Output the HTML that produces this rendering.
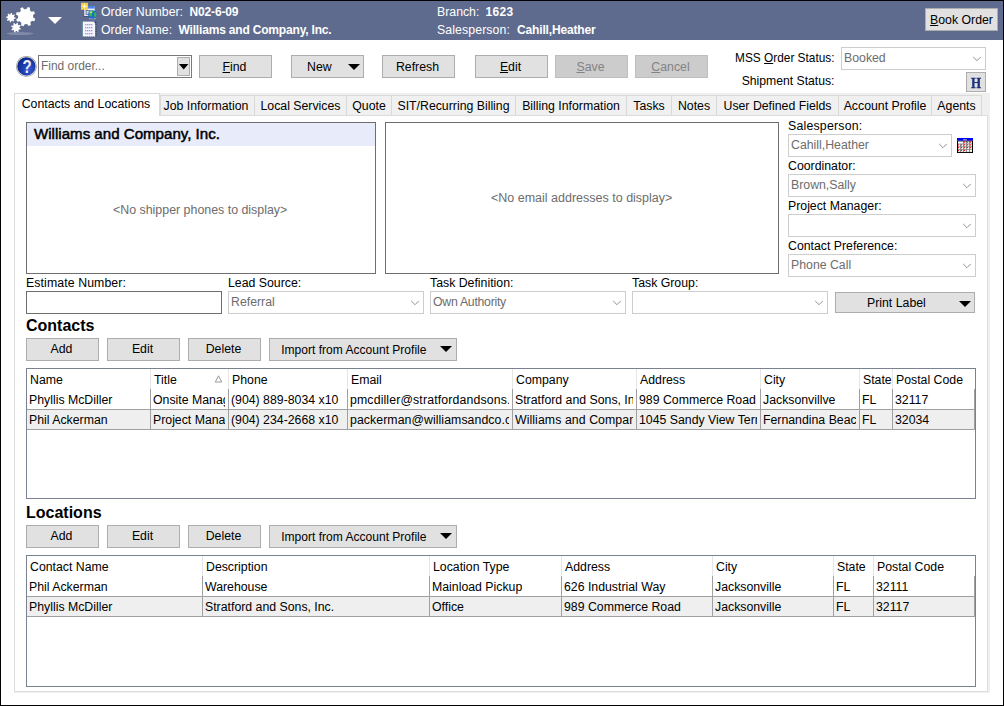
<!DOCTYPE html>
<html><head><meta charset="utf-8"><title>Order</title>
<style>
*{box-sizing:border-box;margin:0;padding:0}
html,body{width:1004px;height:706px;overflow:hidden;background:#fff}
body{font-family:"Liberation Sans",Arial,sans-serif;font-size:12.3px;color:#000;position:relative;line-height:14px}
.a{position:absolute;white-space:nowrap}
#win{left:0;top:0;width:1004px;height:706px;border:1px solid #000}
#hdr{left:1px;top:1px;width:1002px;height:39px;background:#5f6b8e}
.ht{color:#fff}
.hb{color:#fff;font-weight:bold;font-size:12px;letter-spacing:-0.15px}
.btn{background:#e1e1e1;border:1px solid #adadad;text-align:center;padding-right:2px;line-height:21px}
.btn.dis{background:#cccccc;border-color:#bfbfbf;color:#838383}
.cb{background:#fff;border:1px solid #cdcdcd;color:#6d6d6d;line-height:21px;padding-left:2px;font-size:12.3px}
.cb svg{position:absolute;right:3px;top:8px}
.tab{background:#f0f0f0;border:1px solid #d9d9d9;border-bottom:none;line-height:20px;text-align:center}
.tri{width:0;height:0;border-left:6px solid transparent;border-right:6px solid transparent;border-top:6px solid #000}
.grid{background:#fff;border:1px solid #7a8290}
.vl{background:#a0a0a0;width:1px}
.hl{background:#a0a0a0;height:1px}
.h2{font-weight:bold;font-size:16px;line-height:18px}
.ph{color:#6d6d6d}
u{text-decoration:underline}
</style></head><body>
<div class="a" id="win"></div>
<div class="a" id="hdr"></div>
<svg class="a" style="left:0;top:0" width="70" height="40" viewBox="0 0 70 40"><defs><filter id="bl" x="-20%" y="-100%" width="140%" height="300%"><feGaussianBlur stdDeviation="0.7"/></filter></defs><ellipse cx="20" cy="33.6" rx="13.5" ry="1.5" fill="#9aa3bd" opacity="0.55" filter="url(#bl)"/><path d="M33.15 17.47 L35.25 18.80 L34.40 21.13 L31.93 20.80 L30.33 22.55 L30.87 24.98 L28.62 26.03 L27.11 24.05 L24.73 24.15 L23.40 26.25 L21.07 25.40 L21.40 22.93 L19.65 21.33 L17.22 21.87 L16.17 19.62 L18.15 18.11 L18.05 15.73 L15.95 14.40 L16.80 12.07 L19.27 12.40 L20.87 10.65 L20.33 8.22 L22.58 7.17 L24.09 9.15 L26.47 9.05 L27.80 6.95 L30.13 7.80 L29.80 10.27 L31.55 11.87 L33.98 11.33 L35.03 13.58 L33.05 15.09Z" fill="#fff"/><path d="M14.27 17.14 L15.60 17.48 L15.48 18.65 L14.11 18.72 L13.61 19.66 L14.31 20.84 L13.40 21.58 L12.38 20.66 L11.36 20.97 L11.02 22.30 L9.85 22.18 L9.78 20.81 L8.84 20.31 L7.66 21.01 L6.92 20.10 L7.84 19.08 L7.53 18.06 L6.20 17.72 L6.32 16.55 L7.69 16.48 L8.19 15.54 L7.49 14.36 L8.40 13.62 L9.42 14.54 L10.44 14.23 L10.78 12.90 L11.95 13.02 L12.02 14.39 L12.96 14.89 L14.14 14.19 L14.88 15.10 L13.96 16.12Z" fill="#fff"/><path d="M19.49 27.83 L20.83 28.45 L20.46 29.62 L19.01 29.39 L18.31 30.23 L18.81 31.61 L17.72 32.19 L16.87 30.99 L15.77 31.09 L15.15 32.43 L13.98 32.06 L14.21 30.61 L13.37 29.91 L11.99 30.41 L11.41 29.32 L12.61 28.47 L12.51 27.37 L11.17 26.75 L11.54 25.58 L12.99 25.81 L13.69 24.97 L13.19 23.59 L14.28 23.01 L15.13 24.21 L16.23 24.11 L16.85 22.77 L18.02 23.14 L17.79 24.59 L18.63 25.29 L20.01 24.79 L20.59 25.88 L19.39 26.73Z" fill="#fff"/><defs><filter id="b2" x="-20%" y="-20%" width="140%" height="140%"><feGaussianBlur stdDeviation="0.45"/></filter></defs><path d="M48 17 L62 17 L55 24Z" fill="#fff" filter="url(#b2)"/></svg>
<svg class="a" style="left:80px;top:2px" width="18" height="37" viewBox="0 0 18 37"><rect x="3.7" y="4" width="11" height="10.6" fill="#30457a"/><rect x="4.2" y="4" width="10.5" height="10" fill="#f4f5ff"/><rect x="3.7" y="4" width="11" height="2.6" fill="#4a86ea"/><rect x="6" y="8.5" width="4" height="4.2" fill="#c8ccdc" stroke="#59658a" stroke-width="0.8"/><rect x="1" y="0.8" width="7" height="7" fill="#f7c52e"/><path d="M4.5 0.8v7M1 4.300h7M2 1.800l5 5M7 1.800l-5 5" stroke="#ffeea0" stroke-width="0.8"/><circle cx="4.500" cy="4.300" r="1.100" fill="#fffbe0"/><ellipse cx="12.400" cy="16.700" rx="3.600" ry="0.600" fill="#c8d4f0" opacity="0.7"/><circle cx="12.400" cy="12.500" r="4.300" fill="#2464dc"/><path d="M9.300 10.200c1-1.500 2.800-2 3.800-1.500 0.800 0.500-0.300 1.300-1 2.200s0.600 2 -0.200 2.800-1.400 1.200-2 0.300-1.100-2.600-0.600-3.800z" fill="#34c234"/><path d="M14.200 10.500c0.800-0.300 2 0.300 2.200 1.500s-0.600 3-1.500 3.300-0.800-1.300-0.600-2.200-0.800-2.200-0.100-2.600z" fill="#34c234"/><circle cx="11" cy="10.300" r="1" fill="#d8f4d8" opacity="0.8"/><rect x="2.800" y="19.600" width="12.400" height="15" fill="#f6f4ff"/><path d="M5 22.700h8M5 25.800h8M5 28.800h8M5 31.800h8" stroke="#7a80d0" stroke-width="1.100" stroke-dasharray="1.400 0.600"/><path d="M2.100 19.600v15.400" stroke="#2fae90" stroke-width="1.200" stroke-dasharray="0.900 1.300"/><path d="M16 20v15" stroke="#2f3650" stroke-width="1.200" stroke-dasharray="0.900 1.300"/><path d="M3 35h12" stroke="#555e80" stroke-width="0.800" stroke-dasharray="1 1"/><path d="M13.500 19.600h2.500v2.500z" fill="#3a4060"/></svg>
<div class="a ht" style="left:101px;top:5px;">Order Number:</div>
<div class="a hb" style="left:189.5px;top:5px;">N02-6-09</div>
<div class="a ht" style="left:101px;top:23px;">Order Name:</div>
<div class="a hb" style="left:178.5px;top:23px;letter-spacing:-0.18px">Williams and Company, Inc.</div>
<div class="a ht" style="left:437px;top:5px;">Branch:</div>
<div class="a hb" style="left:485.5px;top:5px;letter-spacing:0.3px">1623</div>
<div class="a ht" style="left:437px;top:23px;letter-spacing:0.1px">Salesperson:</div>
<div class="a hb" style="left:517px;top:23px;">Cahill,Heather</div>
<div class="a btn" style="left:925px;top:8px;width:73px;height:23px;line-height:23px;padding-right:0"><u>B</u>ook Order</div>
<svg class="a" style="left:15px;top:55px" width="23" height="23" viewBox="0 0 23 23"><defs><radialGradient id="hg" cx="0.62" cy="0.68" r="0.75"><stop offset="0" stop-color="#3558d8"/><stop offset="0.55" stop-color="#1a3aa8"/><stop offset="1" stop-color="#0c2480"/></radialGradient></defs><circle cx="11.4" cy="11.4" r="10.4" fill="#8c8c8c"/><circle cx="11.4" cy="11.4" r="9.9" fill="#d6d6d6"/><circle cx="11.4" cy="11.4" r="9.1" fill="url(#hg)"/><text transform="translate(12.1 18.4) scale(0.86 1)" x="0" y="0" text-anchor="middle" font-family="Liberation Sans, sans-serif" font-weight="bold" font-size="17.5" fill="#eef0f6">?</text></svg>
<div class="a " style="left:38px;top:55px;width:154px;height:23px;background:#fff;border:1px solid #7a7a7a"><div class="a ph" style="left:2px;top:3px;font-size:11.950px">Find order...</div><div class="a" style="left:138px;top:1px;width:13px;height:19px;background:#e1e1e1;border:1px solid #adadad"></div><svg class="a" style="left:140px;top:7.800px" width="10" height="6"><path d="M0 0h9.400L4.700 5.400z" fill="#000"/></svg></div>
<div class="a btn " style="left:199px;top:55px;width:73px;height:23px;line-height:23px;"><u>F</u>ind</div>
<div class="a btn" style="left:291px;top:55px;width:73px;height:23px;text-align:left;padding-left:15px;line-height:23px">New<svg class="a" style="left:56px;top:8px" width="12" height="6"><path d="M0 0h12L6 6z" fill="#000"/></svg></div>
<div class="a btn " style="left:382px;top:55px;width:73px;height:23px;line-height:23px;">Refresh</div>
<div class="a btn " style="left:475px;top:55px;width:73px;height:23px;line-height:23px;"><u>E</u>dit</div>
<div class="a btn dis" style="left:555px;top:55px;width:73px;height:23px;line-height:23px;"><u>S</u>ave</div>
<div class="a btn dis" style="left:635px;top:55px;width:73px;height:23px;line-height:23px;"><u>C</u>ancel</div>
<div class="a " style="left:0px;top:51px;left:auto;right:169.5px;font-size:11.85px">MSS <u>O</u>rder Status:</div>
<div class="a " style="left:0px;top:74px;left:auto;right:169.5px;font-size:12.2px">Shipment Status:</div>
<div class="a cb" style="left:841px;top:47px;width:145px;height:23px;">Booked<svg width="10" height="6" viewBox="0 0 10 6"><path d="M1.2 0.9 L5 4.7 L8.8 0.9" fill="none" stroke="#8c8c8c" stroke-width="0.95"/></svg></div>
<div class="a " style="left:966px;top:72px;width:20px;height:20px;background:#e1e1e1;border:1px solid #adadad"><div class="a" style="left:0;top:2px;width:18px;text-align:center;font-family:'Liberation Serif',serif;font-weight:bold;font-size:15.5px;color:#1b2f7a;line-height:15px;transform:scaleX(0.84);-webkit-text-stroke:0.3px #1b2f7a">H</div></div>
<div class="a " style="left:14px;top:93px;width:976px;height:600px;background:#f0f0f0"></div>
<div class="a tab" style="left:160px;top:95px;width:95px;height:21px;padding-right:3px">Job Information</div>
<div class="a tab" style="left:254px;top:95px;width:93px;height:21px;">Local Services</div>
<div class="a tab" style="left:346px;top:95px;width:46px;height:21px;">Quote</div>
<div class="a tab" style="left:391px;top:95px;width:125px;height:21px;">SIT/Recurring Billing</div>
<div class="a tab" style="left:515px;top:95px;width:112px;height:21px;">Billing Information</div>
<div class="a tab" style="left:626px;top:95px;width:46px;height:21px;">Tasks</div>
<div class="a tab" style="left:671px;top:95px;width:46px;height:21px;">Notes</div>
<div class="a tab" style="left:716px;top:95px;width:123px;height:21px;">User Defined Fields</div>
<div class="a tab" style="left:838px;top:95px;width:94px;height:21px;">Account Profile</div>
<div class="a tab" style="left:931px;top:95px;width:51px;height:21px;">Agents</div>
<div class="a " style="left:14px;top:115px;width:974px;height:577px;background:#fff;border:1px solid #dcdcdc"></div>
<div class="a " style="left:14px;top:93px;width:146px;height:23px;background:#fff;border:1px solid #d9d9d9;border-bottom:none;text-align:center;line-height:20px;padding-right:2px">Contacts and Locations</div>
<div class="a " style="left:26px;top:122px;width:350px;height:152px;background:#fff;border:1px solid #6e6e6e"><div class="a" style="left:0;top:0;width:348px;height:23px;background:#e8ecfa"></div><div class="a" style="left:7px;top:2px;font-size:15.1px;line-height:18px;-webkit-text-stroke:0.5px #000">Williams and Company, Inc.</div></div>
<div class="a ph" style="left:113px;top:203px;font-size:12.4px">&lt;No shipper phones to display&gt;</div>
<div class="a " style="left:385px;top:122px;width:394px;height:152px;background:#fff;border:1px solid #6e6e6e"></div>
<div class="a ph" style="left:491px;top:191px;font-size:12.5px">&lt;No email addresses to display&gt;</div>
<div class="a " style="left:788px;top:119px;letter-spacing:0.22px">Salesperson:</div>
<div class="a cb" style="left:788px;top:134px;width:164px;height:23px;">Cahill,Heather<svg width="10" height="6" viewBox="0 0 10 6"><path d="M1.2 0.9 L5 4.7 L8.8 0.9" fill="none" stroke="#8c8c8c" stroke-width="0.95"/></svg></div>
<svg class="a" style="left:957px;top:138px" width="16" height="15" viewBox="0 0 16 15"><rect x="0" y="2.5" width="16" height="12.5" fill="#000"/><rect x="0" y="0" width="16" height="2.6" fill="#0000ff"/><rect x="6" y="1.4" width="4" height="0.8" fill="#d8d090"/><rect x="1" y="3.4" width="14" height="10.7" fill="#8a8a8a"/><rect x="1" y="3.60" width="5" height="1.9" fill="#fff"/><rect x="7" y="3.60" width="2" height="1.9" fill="#fff"/><rect x="7" y="3.60" width="1.1" height="1.1" fill="#ff0000"/><rect x="10" y="3.60" width="2" height="1.9" fill="#fff"/><rect x="10" y="3.60" width="1.1" height="1.1" fill="#ff0000"/><rect x="13" y="3.60" width="2" height="1.9" fill="#fff"/><rect x="13" y="3.60" width="1.1" height="1.1" fill="#ff0000"/><rect x="1" y="6.35" width="2" height="1.9" fill="#fff"/><rect x="1" y="6.35" width="1.1" height="1.1" fill="#ff0000"/><rect x="4" y="6.35" width="2" height="1.9" fill="#fff"/><rect x="4" y="6.35" width="1.1" height="1.1" fill="#ff0000"/><rect x="7" y="6.35" width="2" height="1.9" fill="#fff"/><rect x="7" y="6.35" width="1.1" height="1.1" fill="#ff0000"/><rect x="10" y="6.35" width="2" height="1.9" fill="#fff"/><rect x="10" y="6.35" width="1.1" height="1.1" fill="#ff0000"/><rect x="13" y="6.35" width="2" height="1.9" fill="#fff"/><rect x="13" y="6.35" width="1.1" height="1.1" fill="#ff0000"/><rect x="1" y="9.10" width="2" height="1.9" fill="#fff"/><rect x="1" y="9.10" width="1.1" height="1.1" fill="#ff0000"/><rect x="4" y="9.10" width="2" height="1.9" fill="#fff"/><rect x="4" y="9.10" width="1.1" height="1.1" fill="#ff0000"/><rect x="7" y="9.10" width="2" height="1.9" fill="#fff"/><rect x="7" y="9.10" width="1.1" height="1.1" fill="#ff0000"/><rect x="10" y="9.10" width="2" height="1.9" fill="#fff"/><rect x="10" y="9.10" width="1.1" height="1.1" fill="#ff0000"/><rect x="13" y="9.10" width="2" height="1.9" fill="#fff"/><rect x="13" y="9.10" width="1.1" height="1.1" fill="#ff0000"/><rect x="1" y="11.85" width="2" height="1.9" fill="#fff"/><rect x="1" y="11.85" width="1.1" height="1.1" fill="#ff0000"/><rect x="4" y="11.85" width="2" height="1.9" fill="#fff"/><rect x="4" y="11.85" width="1.1" height="1.1" fill="#ff0000"/><rect x="7" y="11.85" width="2" height="1.9" fill="#fff"/><rect x="7" y="11.85" width="1.1" height="1.1" fill="#ff0000"/><rect x="10" y="11.85" width="2" height="1.9" fill="#fff"/><rect x="13" y="11.85" width="2" height="1.9" fill="#fff"/></svg>
<div class="a " style="left:788px;top:159px;">Coordinator:</div>
<div class="a cb" style="left:788px;top:174px;width:188px;height:23px;">Brown,Sally<svg width="10" height="6" viewBox="0 0 10 6"><path d="M1.2 0.9 L5 4.7 L8.8 0.9" fill="none" stroke="#8c8c8c" stroke-width="0.95"/></svg></div>
<div class="a " style="left:788px;top:199px;">Project Manager:</div>
<div class="a cb" style="left:788px;top:214px;width:188px;height:23px;"><svg width="10" height="6" viewBox="0 0 10 6"><path d="M1.2 0.9 L5 4.7 L8.8 0.9" fill="none" stroke="#8c8c8c" stroke-width="0.95"/></svg></div>
<div class="a " style="left:788px;top:239px;">Contact Preference:</div>
<div class="a cb" style="left:788px;top:254px;width:188px;height:23px;">Phone Call<svg width="10" height="6" viewBox="0 0 10 6"><path d="M1.2 0.9 L5 4.7 L8.8 0.9" fill="none" stroke="#8c8c8c" stroke-width="0.95"/></svg></div>
<div class="a " style="left:26px;top:276px;letter-spacing:0.1px">Estimate Number:</div>
<div class="a " style="left:26px;top:291px;width:196px;height:23px;background:#fff;border:1px solid #6e6e6e"></div>
<div class="a " style="left:228px;top:276px;">Lead Source:</div>
<div class="a cb" style="left:228px;top:291px;width:196px;height:23px;">Referral<svg width="10" height="6" viewBox="0 0 10 6"><path d="M1.2 0.9 L5 4.7 L8.8 0.9" fill="none" stroke="#8c8c8c" stroke-width="0.95"/></svg></div>
<div class="a " style="left:430px;top:276px;">Task Definition:</div>
<div class="a cb" style="left:430px;top:291px;width:196px;height:23px;"><span style="letter-spacing:-0.28px">Own Authority</span><svg width="10" height="6" viewBox="0 0 10 6"><path d="M1.2 0.9 L5 4.7 L8.8 0.9" fill="none" stroke="#8c8c8c" stroke-width="0.95"/></svg></div>
<div class="a " style="left:632px;top:276px;">Task Group:</div>
<div class="a cb" style="left:632px;top:291px;width:196px;height:23px;"><svg width="10" height="6" viewBox="0 0 10 6"><path d="M1.2 0.9 L5 4.7 L8.8 0.9" fill="none" stroke="#8c8c8c" stroke-width="0.95"/></svg></div>
<div class="a btn" style="left:835px;top:292px;width:140px;height:21px;line-height:21px;text-align:left;padding-left:31px">Print Label<svg class="a" style="left:122.600px;top:8px" width="12" height="6"><path d="M0 0h12L6 6z" fill="#000"/></svg></div>
<div class="a h2" style="left:26px;top:317px;">Contacts</div>
<div class="a btn " style="left:26px;top:338px;width:73px;height:23px;line-height:21px;">Add</div>
<div class="a btn " style="left:107px;top:338px;width:73px;height:23px;line-height:21px;">Edit</div>
<div class="a btn " style="left:188px;top:338px;width:73px;height:23px;line-height:21px;">Delete</div>
<div class="a btn" style="left:269px;top:338px;width:188px;height:23px;text-align:left;padding-left:11.200px;line-height:23px;font-size:12.05px">Import from Account Profile<svg class="a" style="left:170.300px;top:7.400px" width="12" height="6"><path d="M0 0h12L6 6z" fill="#000"/></svg></div>
<div class="a grid" style="left:26px;top:368px;width:950px;height:131px;"><div class="a" style="left:0;top:41px;width:948px;height:19px;background:#efefef"></div><div class="a hl" style="left:0;top:40px;width:948px"></div><div class="a hl" style="left:0;top:60px;width:948px"></div><div class="a" style="left:123px;top:0;width:1px;height:20px;background:#e5e5e5"></div><div class="a vl" style="left:123px;top:20px;height:41px"></div><div class="a" style="left:201px;top:0;width:1px;height:20px;background:#e5e5e5"></div><div class="a vl" style="left:201px;top:20px;height:41px"></div><div class="a" style="left:320px;top:0;width:1px;height:20px;background:#e5e5e5"></div><div class="a vl" style="left:320px;top:20px;height:41px"></div><div class="a" style="left:485px;top:0;width:1px;height:20px;background:#e5e5e5"></div><div class="a vl" style="left:485px;top:20px;height:41px"></div><div class="a" style="left:609px;top:0;width:1px;height:20px;background:#e5e5e5"></div><div class="a vl" style="left:609px;top:20px;height:41px"></div><div class="a" style="left:733px;top:0;width:1px;height:20px;background:#e5e5e5"></div><div class="a vl" style="left:733px;top:20px;height:41px"></div><div class="a" style="left:832px;top:0;width:1px;height:20px;background:#e5e5e5"></div><div class="a vl" style="left:832px;top:20px;height:41px"></div><div class="a" style="left:865px;top:0;width:1px;height:20px;background:#e5e5e5"></div><div class="a vl" style="left:865px;top:20px;height:41px"></div><div class="a vl" style="left:947px;top:20px;height:41px"></div><div class="a" style="left:3px;top:4px">Name</div><div class="a" style="left:127px;top:4px">Title</div><div class="a" style="left:205px;top:4px">Phone</div><div class="a" style="left:324px;top:4px">Email</div><div class="a" style="left:489px;top:4px">Company</div><div class="a" style="left:613px;top:4px">Address</div><div class="a" style="left:737px;top:4px">City</div><div class="a" style="left:836px;top:4px">State</div><div class="a" style="left:869px;top:4px">Postal Code</div><div class="a" style="left:2px;top:24px;width:118px;overflow:hidden;">Phyllis McDiller</div><div class="a" style="left:126px;top:24px;width:72px;overflow:hidden;">Onsite Manager</div><div class="a" style="left:204px;top:24px;width:113px;overflow:hidden;">(904) 889-8034 x10</div><div class="a" style="left:323px;top:24px;width:159px;overflow:hidden;letter-spacing:0.14px;">pmcdiller@stratfordandsons.com</div><div class="a" style="left:488px;top:24px;width:118px;overflow:hidden;">Stratford and Sons, Inc.</div><div class="a" style="left:612px;top:24px;width:118px;overflow:hidden;">989 Commerce Road</div><div class="a" style="left:736px;top:24px;width:93px;overflow:hidden;">Jacksonvillve</div><div class="a" style="left:835px;top:24px;width:27px;overflow:hidden;">FL</div><div class="a" style="left:868px;top:24px;width:77px;overflow:hidden;">32117</div><div class="a" style="left:2px;top:44px;width:118px;overflow:hidden;">Phil Ackerman</div><div class="a" style="left:126px;top:44px;width:72px;overflow:hidden;">Project Manager</div><div class="a" style="left:204px;top:44px;width:113px;overflow:hidden;">(904) 234-2668 x10</div><div class="a" style="left:323px;top:44px;width:159px;overflow:hidden;letter-spacing:0.07px;">packerman@williamsandco.com</div><div class="a" style="left:488px;top:44px;width:118px;overflow:hidden;letter-spacing:0.08px;">Williams and Company</div><div class="a" style="left:612px;top:44px;width:118px;overflow:hidden;">1045 Sandy View Terrace</div><div class="a" style="left:736px;top:44px;width:93px;overflow:hidden;">Fernandina Beach</div><div class="a" style="left:835px;top:44px;width:27px;overflow:hidden;">FL</div><div class="a" style="left:868px;top:44px;width:77px;overflow:hidden;">32034</div></div>
<svg class="a" style="left:214px;top:375px" width="9" height="8"><path d="M4.500 0.800L7.700 7H1.300z" fill="none" stroke="#9a9a9a" stroke-width="1"/></svg>
<div class="a h2" style="left:26px;top:504px;">Locations</div>
<div class="a btn " style="left:26px;top:525px;width:73px;height:23px;line-height:21px;">Add</div>
<div class="a btn " style="left:107px;top:525px;width:73px;height:23px;line-height:21px;">Edit</div>
<div class="a btn " style="left:188px;top:525px;width:73px;height:23px;line-height:21px;">Delete</div>
<div class="a btn" style="left:269px;top:525px;width:188px;height:23px;text-align:left;padding-left:11.200px;line-height:23px;font-size:12.05px">Import from Account Profile<svg class="a" style="left:170.300px;top:7.400px" width="12" height="6"><path d="M0 0h12L6 6z" fill="#000"/></svg></div>
<div class="a grid" style="left:26px;top:555px;width:950px;height:132px;"><div class="a" style="left:0;top:41px;width:948px;height:19px;background:#efefef"></div><div class="a hl" style="left:0;top:40px;width:948px"></div><div class="a hl" style="left:0;top:60px;width:948px"></div><div class="a" style="left:175px;top:0;width:1px;height:20px;background:#e5e5e5"></div><div class="a vl" style="left:175px;top:20px;height:41px"></div><div class="a" style="left:402px;top:0;width:1px;height:20px;background:#e5e5e5"></div><div class="a vl" style="left:402px;top:20px;height:41px"></div><div class="a" style="left:534px;top:0;width:1px;height:20px;background:#e5e5e5"></div><div class="a vl" style="left:534px;top:20px;height:41px"></div><div class="a" style="left:685px;top:0;width:1px;height:20px;background:#e5e5e5"></div><div class="a vl" style="left:685px;top:20px;height:41px"></div><div class="a" style="left:806px;top:0;width:1px;height:20px;background:#e5e5e5"></div><div class="a vl" style="left:806px;top:20px;height:41px"></div><div class="a" style="left:846px;top:0;width:1px;height:20px;background:#e5e5e5"></div><div class="a vl" style="left:846px;top:20px;height:41px"></div><div class="a vl" style="left:947px;top:20px;height:41px"></div><div class="a" style="left:3px;top:4px">Contact Name</div><div class="a" style="left:179px;top:4px">Description</div><div class="a" style="left:406px;top:4px">Location Type</div><div class="a" style="left:538px;top:4px">Address</div><div class="a" style="left:689px;top:4px">City</div><div class="a" style="left:810px;top:4px">State</div><div class="a" style="left:850px;top:4px">Postal Code</div><div class="a" style="left:2px;top:24px;width:170px;overflow:hidden;">Phil Ackerman</div><div class="a" style="left:178px;top:24px;width:221px;overflow:hidden;">Warehouse</div><div class="a" style="left:405px;top:24px;width:126px;overflow:hidden;">Mainload Pickup</div><div class="a" style="left:537px;top:24px;width:145px;overflow:hidden;">626 Industrial Way</div><div class="a" style="left:688px;top:24px;width:115px;overflow:hidden;">Jacksonville</div><div class="a" style="left:809px;top:24px;width:34px;overflow:hidden;">FL</div><div class="a" style="left:849px;top:24px;width:96px;overflow:hidden;">32111</div><div class="a" style="left:2px;top:44px;width:170px;overflow:hidden;">Phyllis McDiller</div><div class="a" style="left:178px;top:44px;width:221px;overflow:hidden;">Stratford and Sons, Inc.</div><div class="a" style="left:405px;top:44px;width:126px;overflow:hidden;">Office</div><div class="a" style="left:537px;top:44px;width:145px;overflow:hidden;">989 Commerce Road</div><div class="a" style="left:688px;top:44px;width:115px;overflow:hidden;">Jacksonville</div><div class="a" style="left:809px;top:44px;width:34px;overflow:hidden;">FL</div><div class="a" style="left:849px;top:44px;width:96px;overflow:hidden;">32117</div></div>
</body></html>
